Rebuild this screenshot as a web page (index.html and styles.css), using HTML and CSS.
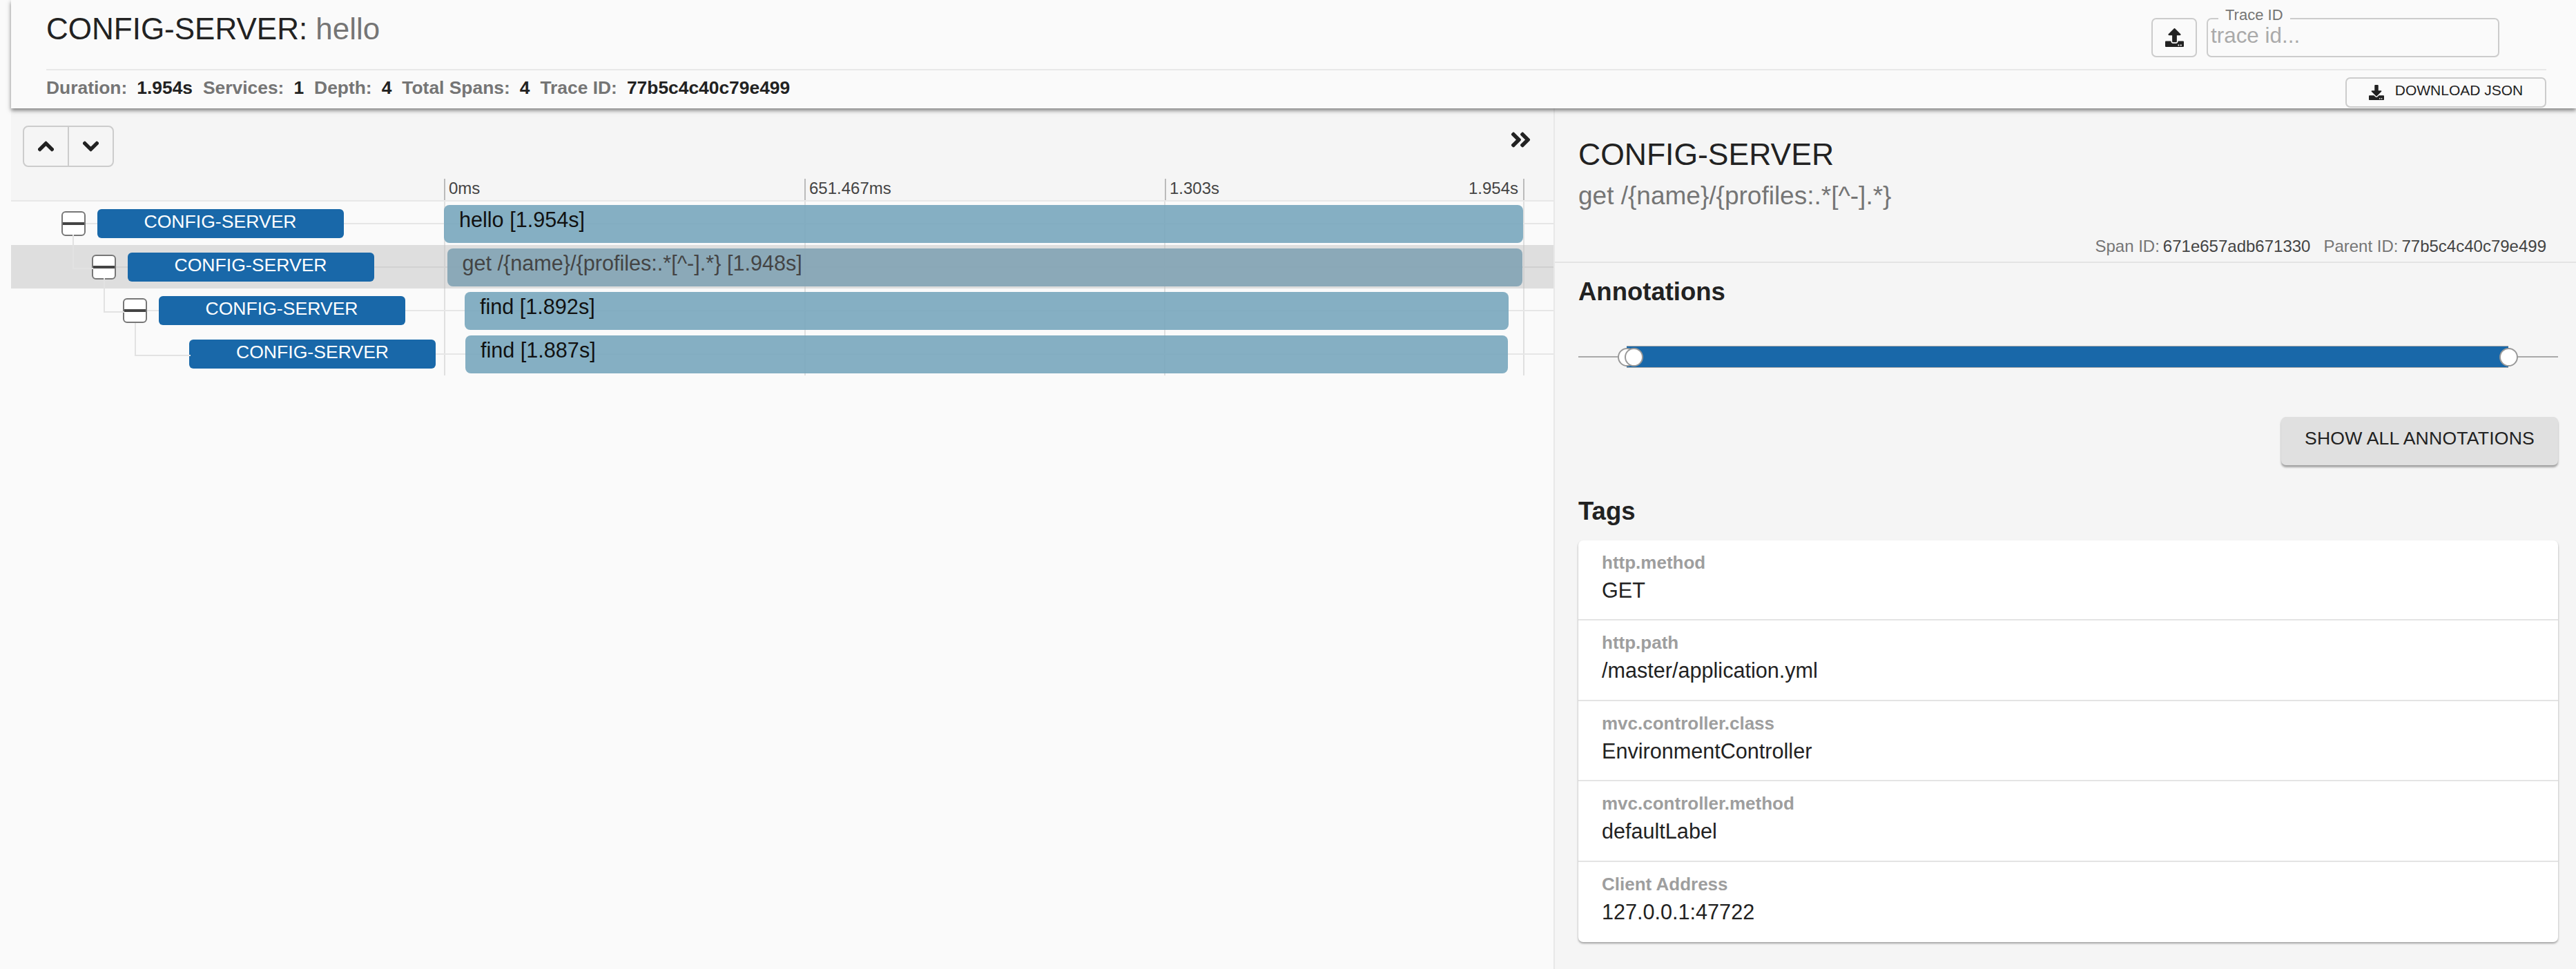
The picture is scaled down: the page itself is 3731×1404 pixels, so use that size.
FILE: index.html
```html
<!DOCTYPE html>
<html lang="en">
<head>
<meta charset="utf-8">
<title>CONFIG-SERVER: hello</title>
<link rel="stylesheet" href="styles.css">
</head>
<body>
<div class="app">
  <header class="header">
    <div class="header-top">
      <h1 class="title">CONFIG-SERVER:<span class="title-muted"> hello</span></h1>
      <div class="trace-tools">
        <button class="icon-btn" type="button">
          <svg class="icon-upload" viewBox="0 0 512 512"><path d="M296 384h-80c-13.3 0-24-10.7-24-24V192h-87.7c-17.8 0-26.7-21.5-14.1-34.1L242.3 5.7c7.5-7.5 19.8-7.5 27.3 0l152.2 152.2c12.6 12.6 3.7 34.1-14.1 34.1H320v168c0 13.3-10.7 24-24 24zm216-8v112c0 13.3-10.7 24-24 24H24c-13.3 0-24-10.7-24-24V376c0-13.3 10.7-24 24-24h136v8c0 30.9 25.1 56 56 56h80c30.9 0 56-25.1 56-56v-8h136c13.3 0 24 10.7 24 24zm-124 88c0-11-9-20-20-20s-20 9-20 20 9 20 20 20 20-9 20-20zm64 0c0-11-9-20-20-20s-20 9-20 20 9 20 20 20 20-9 20-20z"/></svg>
        </button>
        <div class="trace-field">
          <span class="trace-legend">Trace ID</span>
          <input class="trace-input" type="text" placeholder="trace id...">
        </div>
      </div>
    </div>
    <div class="header-bottom">
      <div class="stats">
        <span class="stat-label">Duration:</span><span class="stat-value">1.954s</span>
        <span class="stat-label">Services:</span><span class="stat-value">1</span>
        <span class="stat-label">Depth:</span><span class="stat-value">4</span>
        <span class="stat-label">Total Spans:</span><span class="stat-value">4</span>
        <span class="stat-label">Trace ID:</span><span class="stat-value">77b5c4c40c79e499</span>
      </div>
      <button class="download-btn" type="button">
        <svg class="icon-download" viewBox="0 0 512 512"><path d="M216 0h80c13.3 0 24 10.7 24 24v168h87.7c17.8 0 26.7 21.5 14.1 34.1L269.7 378.3c-7.5 7.5-19.8 7.5-27.3 0L90.1 226.1c-12.6-12.6-3.7-34.1 14.1-34.1H192V24c0-13.3 10.7-24 24-24zm296 376v112c0 13.3-10.7 24-24 24H24c-13.3 0-24-10.7-24-24V376c0-13.3 10.7-24 24-24h146.7l49 49c20.1 20.1 52.5 20.1 72.6 0l49-49H488c13.3 0 24 10.7 24 24zm-124 88c0-11-9-20-20-20s-20 9-20 20 9 20 20 20 20-9 20-20zm64 0c0-11-9-20-20-20s-20 9-20 20 9 20 20 20 20-9 20-20z"/></svg>
        <span>DOWNLOAD JSON</span>
      </button>
    </div>
  </header>

  <main class="main">
    <section class="timeline">
      <div class="toolbar">
        <div class="toolbar-top">
          <div class="btn-group">
            <button class="group-btn" type="button"><svg class="chevron" viewBox="0 0 448 512"><path d="M240.971 130.524l194.343 194.343c9.373 9.373 9.373 24.569 0 33.941l-22.667 22.667c-9.357 9.357-24.522 9.375-33.901.04L224 227.495 69.255 381.516c-9.379 9.335-24.544 9.317-33.901-.04l-22.667-22.667c-9.373-9.373-9.373-24.569 0-33.941L207.03 130.525c9.372-9.373 24.568-9.373 33.941-.001z"/></svg></button>
            <button class="group-btn" type="button"><svg class="chevron" viewBox="0 0 448 512"><path d="M207.029 381.476L12.686 187.132c-9.373-9.373-9.373-24.569 0-33.941l22.667-22.667c9.357-9.357 24.522-9.375 33.901-.04L224 284.505l154.745-154.021c9.379-9.335 24.544-9.317 33.901.04l22.667 22.667c9.373 9.373 9.373 24.569 0 33.941L240.971 381.476c-9.373 9.372-24.569 9.372-33.942 0z"/></svg></button>
          </div>
          <svg class="collapse-icon" viewBox="0 0 448 512"><path d="M224.3 273l-136 136c-9.4 9.4-24.6 9.4-33.9 0l-22.6-22.6c-9.4-9.4-9.4-24.6 0-33.9l96.4-96.4-96.4-96.4c-9.4-9.4-9.4-24.6 0-33.9L54.3 103c9.4-9.4 24.6-9.4 33.9 0l136 136c9.5 9.4 9.5 24.6.1 34zm192-34l-136-136c-9.4-9.4-24.6-9.4-33.9 0l-22.6 22.6c-9.4 9.4-9.4 24.6 0 33.9l96.4 96.4-96.4 96.4c-9.4 9.4-9.4 24.6 0 33.9l22.6 22.6c9.4 9.4 24.6 9.4 33.9 0l136-136c9.4-9.2 9.4-24.4 0-33.8z"/></svg>
        </div>
        <div class="ticks">
          <div class="tick">0ms</div>
          <div class="tick">651.467ms</div>
          <div class="tick tick-last"><span>1.303s</span><span>1.954s</span></div>
        </div>
      </div>

      <div class="rows">
        <div class="row">
          <div class="tree" style="padding-left:73px"><span class="toggle"></span><span class="badge">CONFIG-SERVER</span></div>
          <div class="track"><div class="bar" style="margin-left:0;width:1563px">hello [1.954s]</div></div>
        </div>
        <div class="row row-selected">
          <div class="tree" style="padding-left:117px"><span class="toggle toggle-child"></span><span class="badge">CONFIG-SERVER</span></div>
          <div class="track"><div class="bar" style="margin-left:4.5px;width:1557px">get /{name}/{profiles:.*[^-].*} [1.948s]</div></div>
        </div>
        <div class="row">
          <div class="tree" style="padding-left:162px"><span class="toggle toggle-child"></span><span class="badge">CONFIG-SERVER</span></div>
          <div class="track"><div class="bar" style="margin-left:30px;width:1512px">find [1.892s]</div></div>
        </div>
        <div class="row">
          <div class="tree" style="padding-left:258px"><span class="badge badge-leaf">CONFIG-SERVER</span></div>
          <div class="track"><div class="bar" style="margin-left:31px;width:1510px">find [1.887s]</div></div>
        </div>
      </div>
    </section>

    <aside class="detail">
      <div class="detail-head">
        <h2 class="detail-title">CONFIG-SERVER</h2>
        <div class="detail-sub">get /{name}/{profiles:.*[^-].*}</div>
        <div class="ids">
          <span class="id-label">Span ID:</span><span class="id-value">671e657adb671330</span>
          <span class="id-label id-second">Parent ID:</span><span class="id-value">77b5c4c40c79e499</span>
        </div>
      </div>
      <div class="detail-body">
        <h3 class="section-title section-annotations">Annotations</h3>
        <div class="slider">
          <div class="slider-rail"></div>
          <div class="slider-track"></div>
          <span class="thumb thumb-a"></span>
          <span class="thumb thumb-b"></span>
          <span class="thumb thumb-c"></span>
        </div>
        <div class="show-row"><button class="show-btn" type="button">SHOW ALL ANNOTATIONS</button></div>
        <h3 class="section-title section-tags">Tags</h3>
        <div class="tags">
          <div class="tag"><div class="tag-key">http.method</div><div class="tag-value">GET</div></div>
          <div class="tag"><div class="tag-key">http.path</div><div class="tag-value">/master/application.yml</div></div>
          <div class="tag"><div class="tag-key">mvc.controller.class</div><div class="tag-value">EnvironmentController</div></div>
          <div class="tag"><div class="tag-key">mvc.controller.method</div><div class="tag-value">defaultLabel</div></div>
          <div class="tag"><div class="tag-key">Client Address</div><div class="tag-value">127.0.0.1:47722</div></div>
        </div>
      </div>
    </aside>
  </main>
</div>
</body>
</html>
```
FILE: styles.css
```css
* { box-sizing: border-box; }
html, body { margin: 0; height: 100%; }
body {
  background: #fafafa;
  color: #222;
  font-family: "Liberation Sans", Arial, sans-serif;
  overflow: hidden;
}
button { font-family: inherit; cursor: pointer; }

.app {
  height: 100vh;
  padding-left: 16px;
  display: flex;
  flex-direction: column;
}

/* Header */
.header {
  position: relative;
  z-index: 2;
  height: 157px;
  flex: none;
  padding: 0 43px 0 51px;
  background: #fafafa;
  box-shadow: 0 3px 6px rgba(0, 0, 0, .5);
}
.header-top {
  height: 102px;
  border-bottom: 2px solid #e8e8e8;
  display: flex;
  justify-content: space-between;
  align-items: flex-start;
}
.title {
  margin: 17px 0 0;
  font-size: 44px;
  line-height: 50px;
  font-weight: 400;
  color: #222;
}
.title-muted { color: #757575; }
.trace-tools {
  margin: 26px 68px 0 0;
  display: flex;
  gap: 14px;
}
.icon-btn {
  width: 66px;
  height: 57px;
  padding: 0;
  background: transparent;
  border: 2px solid #ccc;
  border-radius: 7px;
  display: flex;
  align-items: center;
  justify-content: center;
}
.icon-upload { width: 27px; height: 27px; fill: #222; }
.trace-field { position: relative; width: 424px; height: 57px; }
.trace-legend {
  position: absolute;
  left: 17px;
  top: -17px;
  padding: 0 10px;
  background: #fafafa;
  font-size: 22px;
  line-height: 26px;
  color: #757575;
}
.trace-input {
  width: 100%;
  height: 100%;
  padding: 0 4px 6px;
  background: transparent;
  border: 2px solid #ccc;
  border-radius: 7px;
  font-family: inherit;
  font-size: 31.4px;
  color: #222;
  outline: none;
}
.trace-input::placeholder { color: #aaa; opacity: 1; }
.header-bottom {
  height: 55px;
  display: flex;
  justify-content: space-between;
  align-items: flex-start;
}
.stats {
  margin-top: 10px;
  display: flex;
  font-size: 26.4px;
  line-height: 30px;
  font-weight: 700;
}
.stat-label { color: #757575; margin-right: 14px; }
.stat-value { color: #222; margin-right: 15px; }
.download-btn {
  width: 291px;
  height: 44px;
  margin-top: 10px;
  padding: 0 0 6px;
  background: #fafafa;
  border: 2px solid #ccc;
  border-radius: 7px;
  display: flex;
  align-items: center;
  justify-content: center;
  gap: 16px;
  font-size: 21px;
  color: #222;
}
.icon-download { width: 22px; height: 22px; fill: #222; margin-top: 6px; }

/* Main split */
.main {
  flex: 1;
  min-height: 0;
  display: flex;
  margin-left: -16px;
  padding-left: 16px;
}

/* Timeline */
.timeline { width: 2234px; flex: none; }
.toolbar {
  height: 135px;
  background: #f5f5f5;
  border-bottom: 2px solid #e8e8e8;
}
.toolbar-top {
  height: 102px;
  padding: 25px 32px 0 17px;
  display: flex;
  justify-content: space-between;
  align-items: flex-start;
}
.btn-group {
  width: 132px;
  height: 60px;
  display: flex;
  border: 2px solid #ccc;
  border-radius: 8px;
}
.group-btn {
  flex: 1;
  padding: 0;
  background: transparent;
  border: 0;
  display: flex;
  align-items: center;
  justify-content: center;
}
.group-btn + .group-btn { border-left: 2px solid #ccc; }
.chevron { width: 23px; height: 26px; fill: #222; stroke: #222; stroke-width: 24px; }
.collapse-icon { width: 31px; height: 35px; fill: #222; margin-top: 3px; }
.ticks {
  margin-left: 627px;
  width: 1565px;
  height: 31px;
  display: flex;
  font-size: 24px;
  line-height: 28px;
  color: #444;
}
.tick {
  width: 522px;
  flex: none;
  border-left: 2px solid #bbb;
  padding-left: 5px;
}
.tick-last {
  width: 521px;
  display: flex;
  justify-content: space-between;
  border-right: 2px solid #bbb;
  padding-right: 7px;
}

/* Rows */
.row {
  height: 63px;
  display: flex;
}
.row-selected { background: #dedede; }
.tree {
  width: 627px;
  flex: none;
  display: flex;
  align-items: center;
  gap: 16.5px;
  background: linear-gradient(#e6e6e6, #e6e6e6) no-repeat center / 100% 2px content-box;
}
.row-selected .tree { background-image: linear-gradient(#d2d2d2, #d2d2d2); }
.toggle {
  position: relative;
  width: 35px;
  height: 36px;
  flex: none;
  background: #fff;
  border: 2px solid #777;
  border-radius: 6px;
}
.toggle::after {
  content: "";
  position: absolute;
  left: 0;
  right: 0;
  top: 14px;
  height: 4px;
  background: #444;
}
.toggle-child::before {
  content: "";
  position: absolute;
  left: -30px;
  top: -31px;
  width: 28px;
  height: 48px;
  border-left: 2px solid #e2e2e2;
  border-bottom: 2px solid #e2e2e2;
}
.badge {
  position: relative;
  width: 357px;
  height: 42px;
  flex: none;
  background: #1968a9;
  border-radius: 6px;
  color: #fff;
  font-size: 26.6px;
  line-height: 37px;
  text-align: center;
}
.badge-leaf::before {
  content: "";
  position: absolute;
  left: -79px;
  top: -24px;
  width: 79px;
  height: 46px;
  border-left: 2px solid #e2e2e2;
  border-bottom: 2px solid #e2e2e2;
}
.track {
  flex: 1;
  min-width: 0;
  padding-top: 5px;
  background-repeat: no-repeat;
  background-image:
    linear-gradient(#e6e6e6, #e6e6e6),
    linear-gradient(#e0e0e0, #e0e0e0),
    linear-gradient(#e0e0e0, #e0e0e0),
    linear-gradient(#e0e0e0, #e0e0e0),
    linear-gradient(#e0e0e0, #e0e0e0);
  background-size: 100% 2px, 2px 100%, 2px 100%, 2px 100%, 2px 100%;
  background-position: 0 31px, 0 0, 522px 0, 1043px 0, 1563px 0;
}
.row-selected .track {
  background-image:
    linear-gradient(#d0d0d0, #d0d0d0),
    linear-gradient(#d0d0d0, #d0d0d0),
    linear-gradient(#d0d0d0, #d0d0d0),
    linear-gradient(#d0d0d0, #d0d0d0),
    linear-gradient(#d0d0d0, #d0d0d0);
}
.bar {
  height: 55px;
  padding-left: 22px;
  background: rgba(120, 166, 188, .9);
  border-radius: 8px;
  font-size: 30.6px;
  line-height: 42px;
  color: #111;
  white-space: nowrap;
}
.row-selected .bar {
  background: rgba(130, 163, 180, .9);
  color: #444;
}

/* Detail panel */
.detail {
  flex: 1;
  min-width: 0;
  background: #f5f5f5;
  border-left: 2px solid #e8e8e8;
  display: flex;
  flex-direction: column;
}
.detail-head {
  height: 224px;
  flex: none;
  padding: 42px 43px 0 34px;
  border-bottom: 2px solid #e4e4e4;
}
.detail-title {
  margin: 0;
  font-size: 44.5px;
  line-height: 50px;
  font-weight: 400;
}
.detail-sub {
  margin-top: 14px;
  font-size: 37px;
  line-height: 41px;
  color: #757575;
}
.ids {
  margin-top: 39px;
  display: flex;
  justify-content: flex-end;
  font-size: 24px;
  line-height: 28px;
}
.id-label { color: #757575; margin-right: 5px; }
.id-second { margin-left: 19px; }
.id-value { color: #444; }
.detail-body {
  padding: 0 26px 0 34px;
}
.section-title {
  margin: 0;
  font-size: 36.5px;
  line-height: 42px;
  font-weight: 700;
}
.section-annotations { margin-top: 21px; }
.section-tags { margin-top: 46px; }
.slider {
  position: relative;
  height: 32px;
  margin-top: 57px;
}
.slider-rail {
  position: absolute;
  left: 0;
  right: 0;
  top: 15px;
  height: 2px;
  background: #aaa;
}
.slider-track {
  position: absolute;
  left: 70px;
  right: 72px;
  top: 0;
  bottom: 0;
  background: #1968a9;
  border-top: 1px solid #aaa;
  border-bottom: 1px solid #aaa;
}
.thumb {
  position: absolute;
  top: 3px;
  width: 27px;
  height: 27px;
  background: #fff;
  border: 2px solid #999;
  border-radius: 50%;
}
.thumb-a { left: 57px; }
.thumb-b { left: 67px; }
.thumb-c { right: 58px; }
.show-row {
  margin-top: 71px;
  display: flex;
  justify-content: flex-end;
}
.show-btn {
  width: 401px;
  height: 70px;
  padding: 0 0 8px;
  background: #e0e0e0;
  border: 0;
  border-radius: 7px;
  box-shadow: 0 3px 3px rgba(0, 0, 0, .35);
  font-size: 26.6px;
  color: #222;
  letter-spacing: .2px;
}
.tags {
  margin-top: 21px;
  background: #fff;
  border-radius: 7px;
  box-shadow: 0 2px 3px rgba(0, 0, 0, .35);
}
.tag {
  height: 116.4px;
  padding: 17px 34px 0;
  border-bottom: 2px solid #e4e4e4;
}
.tag:last-child { border-bottom: 0; }
.tag-key {
  font-size: 26px;
  line-height: 30px;
  font-weight: 700;
  color: #9e9e9e;
}
.tag-value {
  margin-top: 7px;
  font-size: 30.6px;
  line-height: 36px;
  color: #222;
}
```
